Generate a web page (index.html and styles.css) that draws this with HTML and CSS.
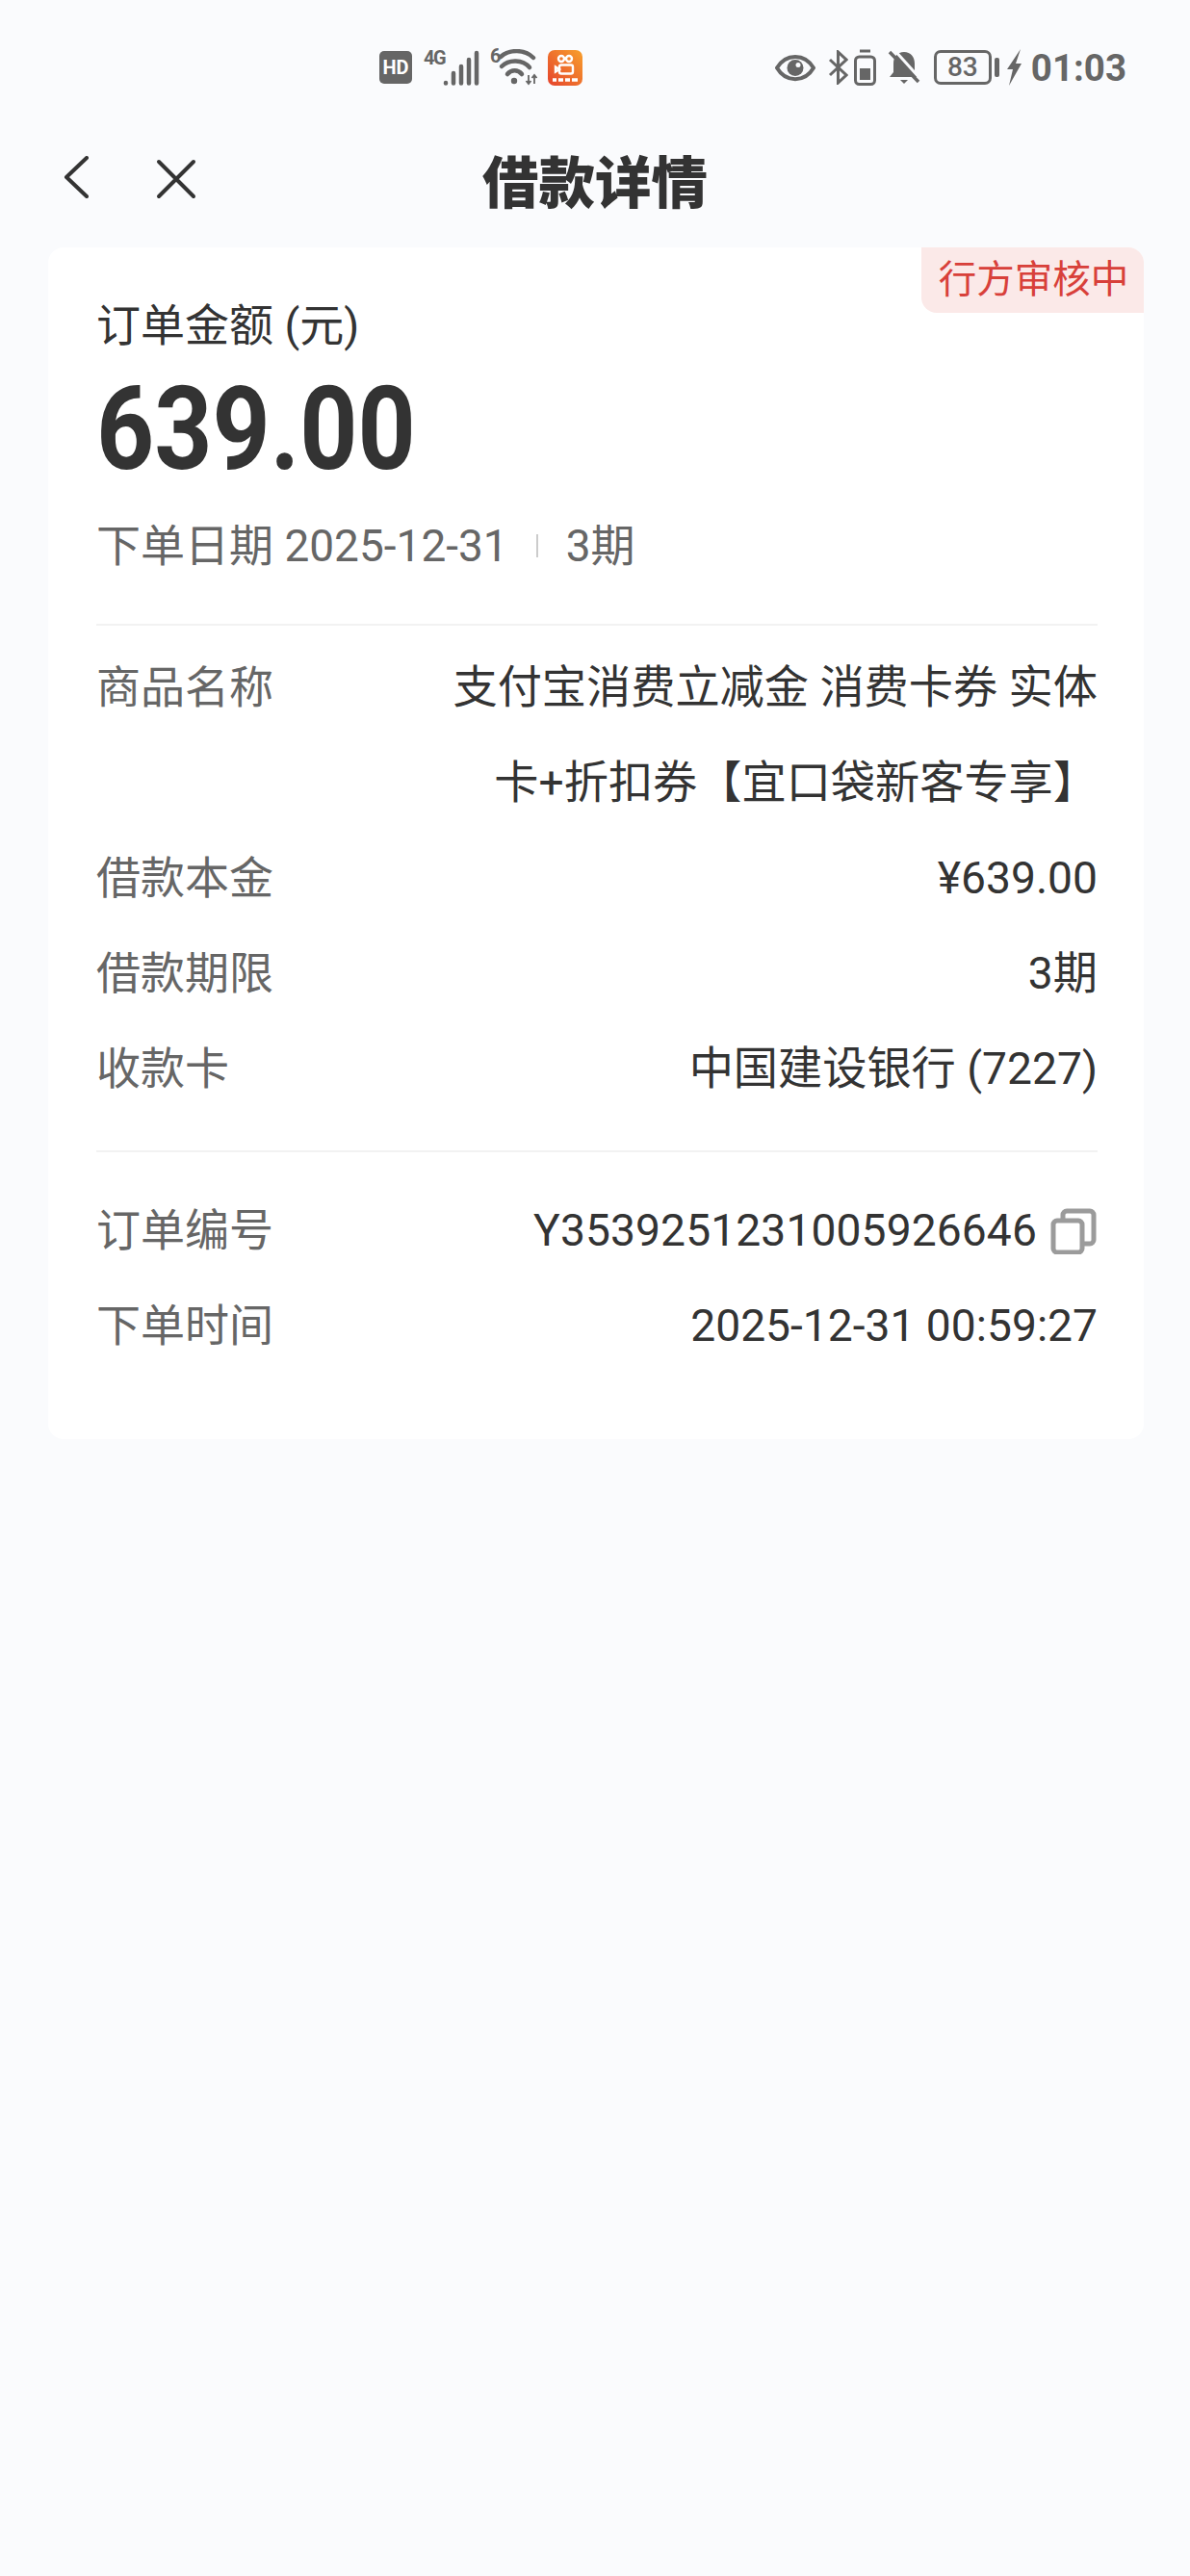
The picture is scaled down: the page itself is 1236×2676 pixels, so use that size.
FILE: index.html
```html
<!DOCTYPE html>
<html lang="zh-CN">
<head>
    <meta charset="UTF-8">
    <meta name="viewport" content="width=device-width, initial-scale=1.0">
    <title>借款详情</title>
    <link rel="stylesheet" href="styles.css">
</head>
<body>
    <div class="status-bar">
        <div class="status-left">
            <span class="hd">HD</span>
            <span class="net net-4g">4G</span>
            <svg class="signal" width="38" height="38" viewBox="0 0 38 38" fill="none" stroke="#666" stroke-width="4.500" stroke-linecap="round"><path d="M3 35v.5M11 25v10.500M19 18v17.500M27 11v24.500M35 4v31.500"/></svg>
            <span class="net net-6">6</span>
            <svg class="wifi" width="42" height="38" viewBox="0 0 42 38" fill="none" stroke="#666" stroke-width="4.500" stroke-linecap="round"><path d="M3 8C12 0 28 0 37 9"/><path d="M4 18C12 10 26 11 33 19"/><path d="M10 26C14 21 21 21 25 26"/><circle cx="17" cy="33" r="3.200" fill="#666" stroke="none"/><path d="M32 27v9M29.500 33l2.500 3 2.500-3M38 27v9M35.500 30l2.500-3 2.500 3" stroke-width="1.800" stroke-linecap="butt"/></svg>
            <svg class="app" width="36" height="37" viewBox="0 0 36 37"><defs><linearGradient id="kwai" x1="0" y1="1" x2="1" y2="0"><stop offset="0" stop-color="#e5432d"/><stop offset="1" stop-color="#f8a02c"/></linearGradient></defs><rect width="36" height="37" rx="7" fill="url(#kwai)"/><g fill="none" stroke="#fff" stroke-width="2.400"><circle cx="14" cy="9" r="3"/><circle cx="22" cy="9" r="3"/><rect x="12" y="15.500" width="14" height="9" rx="2"/><path d="M12 20l-4-2.500v5z"/></g><path d="M5 31h4M11 31h5M18 31h5M25 31h6" stroke="#fff" stroke-width="3.500"/></svg>
        </div>
        <div class="status-right">
            <svg class="eye" width="42" height="31" viewBox="0 0 42 31"><path d="M2 15.500C11 0 31 0 40 15.500 31 31 11 31 2 15.500z" fill="none" stroke="#666" stroke-width="4"/><circle cx="21" cy="15.500" r="8.500" fill="#666"/><circle cx="24" cy="12.500" r="2.500" fill="#fafbfd"/></svg>
            <svg class="bt" width="21" height="36" viewBox="0 0 21 36" fill="none" stroke="#666" stroke-width="3"><path d="M2 10l17 16-8.500 8V2L19 10 2 26"/></svg>
            <svg class="phone-bat" width="23" height="38" viewBox="0 0 23 38"><path d="M6 2h11" stroke="#666" stroke-width="3"/><rect x="1.500" y="8" width="20" height="28.500" rx="4" fill="none" stroke="#666" stroke-width="3"/><rect x="6" y="20" width="11" height="12" fill="#666"/></svg>
            <svg class="bell" width="34" height="36" viewBox="0 0 34 36"><path d="M17 2c-7 0-11 5-11 12v9l-4 5h30l-4-5v-9c0-7-4-12-11-12z" fill="#666"/><path d="M13 31h8l-4 4z" fill="#666"/><path d="M7 0l27 30" stroke="#fafbfd" stroke-width="3"/><path d="M2 2l30 31" stroke="#666" stroke-width="3.500"/></svg>
            <span class="battery-box">83</span>
            <span class="battery-tip"></span>
            <svg class="bolt" width="16" height="38" viewBox="0 0 16 38"><path d="M15 0L1 21h6L3 38 16 15H10z" fill="#666"/></svg>
            <span class="clock">01:03</span>
        </div>
    </div>

    <div class="nav-bar">
        <svg class="nav-back" width="27" height="44" viewBox="0 0 27 44" fill="none" stroke="#333" stroke-width="4" stroke-linecap="round" stroke-linejoin="round"><path d="M24 2L3 22l21 20"/></svg>
        <svg class="nav-close" width="42" height="42" viewBox="0 0 42 42" fill="none" stroke="#333" stroke-width="4" stroke-linecap="round"><path d="M3 3l36 36M39 3L3 39"/></svg>
        <h1>借款详情</h1>
    </div>

    <div class="card">
        <div class="tag">行方审核中</div>
        <div class="amount-label">订单金额 (元)</div>
        <div class="amount"><span>639.00</span></div>
        <div class="order-meta">
            <span>下单日期 2025-12-31</span>
            <i class="meta-sep"></i>
            <span>3期</span>
        </div>
        <div class="section first">
            <div class="row">
                <span class="key">商品名称</span>
                <span class="val val-wrap">支付宝消费立减金 消费卡券 实体卡+折扣券【宜口袋新客专享】</span>
            </div>
            <div class="row">
                <span class="key">借款本金</span>
                <span class="val">¥639.00</span>
            </div>
            <div class="row">
                <span class="key">借款期限</span>
                <span class="val">3期</span>
            </div>
            <div class="row">
                <span class="key">收款卡</span>
                <span class="val">中国建设银行 (7227)</span>
            </div>
        </div>
        <div class="section">
            <div class="row">
                <span class="key">订单编号</span>
                <span class="val val-copy"><span class="order-no">Y3539251231005926646</span>
                    <svg width="48" height="48" viewBox="0 0 48 48" fill="none" stroke="#9b9b9b" stroke-width="5"><rect x="3" y="13" width="30" height="33" rx="4"/><path d="M13 13V7a4 4 0 0 1 4-4h24a4 4 0 0 1 4 4v26a4 4 0 0 1-4 4h-8"/></svg>
                </span>
            </div>
            <div class="row">
                <span class="key">下单时间</span>
                <span class="val">2025-12-31 00:59:27</span>
            </div>
        </div>
    </div>
</body>
</html>
```

FILE: styles.css
```css
* { box-sizing: border-box; }
body {
    margin: 0;
    min-height: 2676px;
    background: #fafbfd;
    color: #333;
    font-family: Roboto, "Noto Sans CJK SC", sans-serif;
}
.status-bar {
    height: 125px;
    padding: 51px 66px 0 394px;
    display: flex;
    justify-content: space-between;
    align-items: flex-start;
}
.status-left, .status-right { display: flex; align-items: center; height: 38px; }
.status-bar svg { display: block; flex: none; }

.hd {
    width: 34px;
    height: 34px;
    background: #666;
    border-radius: 5px;
    font-size: 20px;
    line-height: 34px;
    font-weight: 700;
    text-align: center;
    color: #fff;
}
.net {
    font-size: 20px;
    line-height: 18px;
    font-weight: 700;
    color: #666;
    align-self: flex-start;
}
.net-4g { width: 20px; margin-left: 12px; letter-spacing: -1.500px; white-space: nowrap; }
.net-6 { width: 9px; margin-left: 11px; margin-top: -2px; }
.wifi { margin-left: -1px; }
.app { margin-left: 10px; }

.bt { margin-left: 13px; }
.phone-bat { margin-left: 6px; }
.bell { margin-left: 12px; }
.battery-box {
    width: 60px;
    height: 36px;
    margin-left: 14px;
    border: 3px solid #666;
    border-radius: 7px;
    font-size: 28px;
    line-height: 30px;
    font-weight: 500;
    text-align: center;
    color: #666;
}
.battery-tip {
    width: 5px;
    height: 20px;
    margin-left: 3px;
    background: #666;
    border-radius: 2px;
}
.bolt { margin-left: 7px; }
.clock {
    margin-left: 10px;
    font-size: 38.500px;
    font-weight: 700;
    color: #666;
}

.nav-bar {
    height: 126px;
    padding-bottom: 6px;
    position: relative;
    display: flex;
    align-items: center;
    justify-content: center;
}
.nav-bar h1 {
    margin: 0;
    font-size: 58.500px;
    font-weight: 900;
    color: #333;
}
.nav-back { position: absolute; left: 66px; top: 37px; }
.nav-close { position: absolute; left: 162px; top: 40px; }

.card {
    position: relative;
    margin: 6px 48px 0 50px;
    padding: 50px 48px 68px 50px;
    background: #fff;
    border-radius: 16px;
}
.tag {
    position: absolute;
    top: 0;
    right: 0;
    width: 231px;
    height: 68px;
    padding-left: 2px;
    background: #fbe9e8;
    color: #d8403a;
    font-size: 39.500px;
    line-height: 68px;
    text-align: center;
    border-radius: 0 16px 0 16px;
}
.amount-label { font-size: 46px; line-height: 62px; color: #333; }
.amount {
    font-size: 120px;
    line-height: 132px;
    margin-top: 11px;
    font-weight: 700;
    color: #333;
}
.amount span {
    display: inline-block;
    transform: scaleX(.875);
    transform-origin: left;
}
.order-meta {
    display: flex;
    align-items: center;
    margin-top: 24px;
    font-size: 46px;
    line-height: 62px;
    color: #666;
}
.meta-sep {
    width: 2px;
    height: 24px;
    background: #ccc;
    margin: 0 29px;
}

.section {
    margin-top: 35px;
    padding-top: 32px;
    border-top: 2px solid #f2f2f2;
}
.section.first { margin-top: 50px; padding-top: 15px; }
.row {
    display: flex;
    justify-content: space-between;
    font-size: 46.200px;
    line-height: 99px;
}
.key { flex: none; color: #666; font-size: 46px; }
.val { text-align: right; color: #333; }
.val-wrap { max-width: 684px; }
.val-copy { display: flex; align-items: center; gap: 14px; margin-right: 1px; }
.val-copy svg { flex: none; }
.order-no { letter-spacing: .1px; }
```
